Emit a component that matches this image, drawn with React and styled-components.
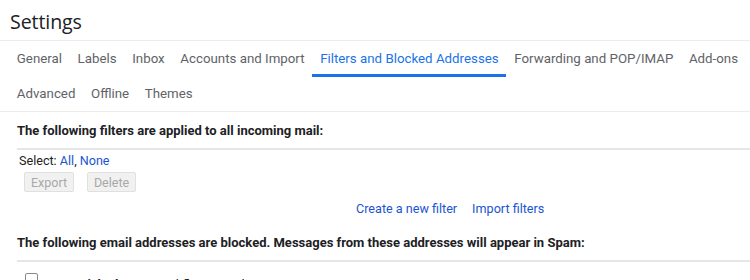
import React from "react";
import styled, { createGlobalStyle } from "styled-components";

const Global = createGlobalStyle`
  html, body { margin: 0; padding: 0; background: #fff; }
  body { font-family: Roboto, Arial, sans-serif; overflow: hidden; }
`;

const Page = styled.div`
  width: 750px;
  height: 280px;
  overflow: hidden;
`;

const Header = styled.div`
  height: 40px;
  border-bottom: 1px solid #ececec;
  display: flex;
  align-items: center;
  padding-left: 10px;
`;

const Title = styled.h1`
  margin: 0;
  font-family: "Open Sans", Roboto, sans-serif;
  font-weight: 400;
  font-size: 19.6px;
  color: #202124;
  letter-spacing: -0.1px;
  transform: translateY(1px);
`;

const TabArea = styled.div`
  padding-left: 9px;
  border-bottom: 1px solid #ececec;
`;

const TabRow = styled.div`
  display: flex;
  height: ${(p) => (p.$second ? 34 : 36)}px;
`;

const Tab = styled.div`
  padding: 0 7.8px;
  font-size: 13.3px;
  font-family: Roboto, sans-serif;
  color: ${(p) => (p.$active ? "#1a73e8" : "#5f6368")};
  display: flex;
  align-items: center;
  box-sizing: border-box;
  border-bottom: 3px solid ${(p) => (p.$active ? "#1a73e8" : "transparent")};
  padding-top: 2px;
  white-space: nowrap;
`;

const Section = styled.div`
  padding-left: 17px;
`;

const SectionTitle = styled.div`
  font-weight: 700;
  font-size: 13px;
  color: #202124;
  height: ${(p) => p.$h}px;
  display: flex;
  align-items: center;
  border-bottom: 2px solid #e6e6e6;
  box-sizing: border-box;
  padding-top: ${(p) => p.$pt}px;
  white-space: nowrap;
`;

const SelectLine = styled.div`
  font-size: 12.6px;
  color: #222;
  padding: 3px 0 0 2px;
  height: 17px;
`;

const Link = styled.span`
  color: #1a55d3;
  cursor: pointer;
`;

const Buttons = styled.div`
  display: flex;
  gap: 13px;
  padding: 2px 0 0 7px;
`;

const GrayButton = styled.div`
  width: ${(p) => p.$w}px;
  height: 20px;
  box-sizing: border-box;
  background: #f1f1f1;
  border: 1px solid #e0e0e0;
  border-radius: 2px;
  color: #a8a8a8;
  font-size: 12.5px;
  display: flex;
  align-items: center;
  justify-content: center;
`;

const FilterLinks = styled.div`
  display: flex;
  gap: 15px;
  padding-left: 339px;
  margin-top: 7px;
  font-size: 12.6px;
  height: 18px;
  align-items: center;
`;

const BlockedRow = styled.div`
  display: flex;
  align-items: flex-start;
  padding: 11px 0 0 25px;
  font-size: 13px;
  color: #222;
`;

const CheckBox = styled.div`
  width: 11px;
  height: 11px;
  flex: none;
  border: 1px solid #8a8a8a;
  border-radius: 2px;
  margin-right: 38px;
`;

const Name = styled.span`
  font-weight: 700;
  padding-top: 4px;
`;

const Email = styled.span`
  padding-top: 4px;
  padding-left: 4px;
`;

export default function App() {
  const row1 = [
    "General",
    "Labels",
    "Inbox",
    "Accounts and Import",
    "Filters and Blocked Addresses",
    "Forwarding and POP/IMAP",
    "Add-ons",
  ];
  const row2 = ["Advanced", "Offline", "Themes"];
  return (
    <Page>
      <Global />
      <Header>
        <Title>Settings</Title>
      </Header>
      <TabArea>
        <TabRow>
          {row1.map((t) => (
            <Tab key={t} $active={t === "Filters and Blocked Addresses"}>
              {t}
            </Tab>
          ))}
        </TabRow>
        <TabRow $second>
          {row2.map((t) => (
            <Tab key={t}>{t}</Tab>
          ))}
        </TabRow>
      </TabArea>
      <Section>
        <SectionTitle $h={38} $pt={1}>
          The following filters are applied to all incoming mail:
        </SectionTitle>
        <SelectLine>
          Select: <Link>All</Link>, <Link>None</Link>
        </SelectLine>
        <Buttons>
          <GrayButton $w={50}>Export</GrayButton>
          <GrayButton $w={49}>Delete</GrayButton>
        </Buttons>
        <FilterLinks>
          <Link>Create a new filter</Link>
          <Link>Import filters</Link>
        </FilterLinks>
        <SectionTitle $h={45} $pt={7}>
          The following email addresses are blocked. Messages from these
          addresses will appear in Spam:
        </SectionTitle>
      </Section>
      <BlockedRow>
        <CheckBox />
        <Name>Mick Flaum</Name>
        <Email>&lt;mickflaum@aol.com&gt;</Email>
      </BlockedRow>
    </Page>
  );
}
